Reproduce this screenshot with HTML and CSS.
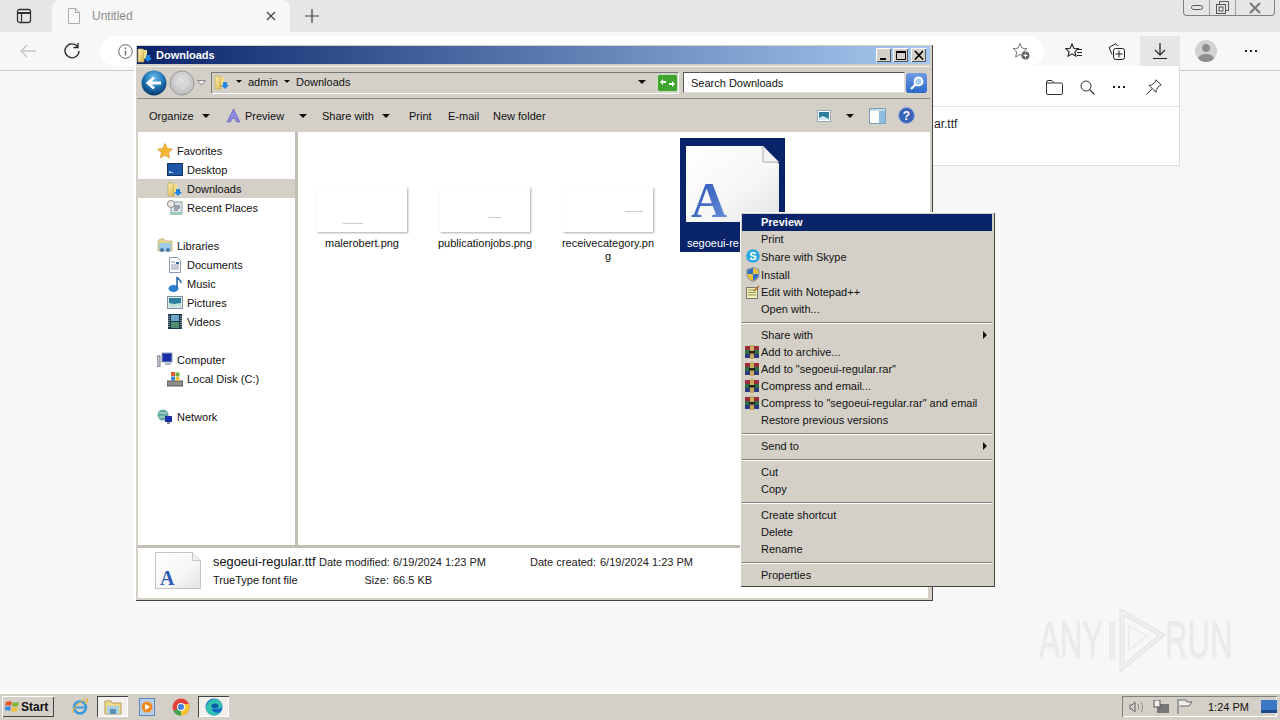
FILE: index.html
```html
<!DOCTYPE html>
<html lang="en">
<head>
    <meta charset="UTF-8">
    <meta name="viewport" content="width=device-width, initial-scale=1.0">
    <title>Downloads</title>
    <link rel="stylesheet" href="styles.css">
</head>
<body>
    <!-- shared icons -->
    <svg class="defs" aria-hidden="true">
        <defs>
            <linearGradient id="folderFill" x1="0" y1="0" x2="1" y2="1"><stop offset="0" stop-color="#fdf3b4"/><stop offset="1" stop-color="#d9b34f"/></linearGradient>
            <linearGradient id="pageFill" x1="0" y1="0" x2="1" y2="1"><stop offset="0" stop-color="#ffffff"/><stop offset="0.6" stop-color="#f6f6f6"/><stop offset="1" stop-color="#e2e2e2"/></linearGradient>
            <radialGradient id="backFill" cx="0.5" cy="0.3" r="0.75"><stop offset="0" stop-color="#6cc0ee"/><stop offset="0.55" stop-color="#1c6fb0"/><stop offset="1" stop-color="#062f63"/></radialGradient>
            <radialGradient id="fwdFill" cx="0.5" cy="0.4" r="0.7"><stop offset="0" stop-color="#e6e6e6"/><stop offset="1" stop-color="#b4b4b4"/></radialGradient>
            <symbol id="i-folder-dl" viewBox="0 0 16 16">
                <path d="M1 2h5l1 1v12H1z" fill="url(#folderFill)" stroke="#b89a4a" stroke-width=".6"/>
                <path d="M7 3h3v9H7z" fill="#f3dd8a"/>
                <path d="M9 8h4v3h2l-4 4-4-4h2z" fill="#1f86e0"/>
            </symbol>
            <symbol id="i-rar" viewBox="0 0 14 14">
                <rect x="0" y="1" width="14" height="4" fill="#9c2a3a"/>
                <rect x="0" y="5" width="14" height="4" fill="#2a6f42"/>
                <rect x="0" y="9" width="14" height="4" fill="#2b3a80"/>
                <rect x="5" y="0" width="4" height="14" fill="#c9a95a"/>
                <rect x="4" y="6" width="6" height="2.5" fill="#222"/>
            </symbol>
        </defs>
    </svg>

    <!-- browser behind the window -->
    <div class="tabstrip">
        <svg class="tabstrip-btn" width="16" height="16" viewBox="0 0 16 16"><rect x="1.5" y="1.5" width="13" height="13" rx="2" fill="none" stroke="#333" stroke-width="1.3"/><path d="M1.5 5h13" stroke="#333" stroke-width="2"/><path d="M5.5 5v9" stroke="#333" stroke-width="1.2"/></svg>
        <div class="tab">
            <svg width="14" height="16" viewBox="0 0 14 16"><path d="M1.5.5h7l4 4v11h-11z M8.5.5v4h4" fill="none" stroke="#aaa"/></svg>
            <span class="tab-title">Untitled</span>
            <svg width="10" height="10" viewBox="0 0 10 10"><path d="M1 1l8 8M9 1l-8 8" stroke="#444" stroke-width="1.3"/></svg>
        </div>
        <svg class="new-tab" width="14" height="14" viewBox="0 0 14 14"><path d="M7 0v14M0 7h14" stroke="#444" stroke-width="1.2"/></svg>
        <div class="win-controls">
            <div class="win-cell"><svg width="12" height="6" viewBox="0 0 12 6"><rect x=".5" y=".5" width="11" height="4" rx="2" fill="none" stroke="#555"/></svg></div>
            <div class="win-cell"><svg width="13" height="13" viewBox="0 0 13 13"><rect x=".5" y="3.5" width="9" height="9" fill="none" stroke="#555"/><path d="M3.5 3V.5h9v9H10" fill="none" stroke="#555"/><rect x="3" y="6" width="4" height="4" fill="none" stroke="#555"/></svg></div>
            <div class="win-cell win-cell-wide"><svg width="12" height="12" viewBox="0 0 12 12"><path d="M1 1l10 10M11 1L1 11" stroke="#777" stroke-width="2"/></svg></div>
        </div>
    </div>
    <div class="browserbar">
        <svg class="nav-back" width="16" height="14" viewBox="0 0 16 14"><path d="M16 7H1M7 1L1 7l6 6" fill="none" stroke="#c4c4c4" stroke-width="1.3"/></svg>
        <svg class="nav-reload" width="16" height="16" viewBox="0 0 16 16"><path d="M13.5 3.5A7 7 0 1 0 15 8" fill="none" stroke="#222" stroke-width="1.3"/><path d="M14 0v4.5H9.5" fill="none" stroke="#222" stroke-width="1.3"/></svg>
        <div class="addressbar">
            <svg width="15" height="15" viewBox="0 0 15 15"><circle cx="7.5" cy="7.5" r="6.8" fill="none" stroke="#666"/><path d="M7.5 6.5v5M7.5 3.5v1.6" stroke="#666" stroke-width="1.3"/></svg>
            <svg class="add-fav" width="18" height="18" viewBox="0 0 18 18"><path d="M8 1.5l2 4.6 5 .5-3.700 3.300L12.300 15 8 12.400 3.700 15l1-5.100L1 6.600l5-.5z" fill="none" stroke="#777"/><circle cx="13.500" cy="13.500" r="4" fill="#666"/><path d="M13.500 11.500v4M11.500 13.500h4" stroke="#fff"/></svg>
        </div>
        <svg class="bar-icon-fav" width="18" height="16" viewBox="0 0 18 16"><path d="M7 1l1.800 4.300 4.500.4-3.400 3 1 4.500L7 10.800l-3.900 2.400 1-4.500-3.400-3 4.500-.4z" fill="none" stroke="#222" stroke-width="1.100"/><path d="M12 6.500h5M12 9.500h5M12 12.500h5" stroke="#222"/></svg>
        <svg class="bar-icon-coll" width="18" height="17" viewBox="0 0 18 17"><path d="M4 11.500L1 4.500 7.500.8 10 3" fill="none" stroke="#222"/><rect x="5.500" y="5.500" width="11" height="11" rx="2" fill="none" stroke="#222"/><path d="M11 7.500v7M7.500 11h7" stroke="#222"/></svg>
        <div class="dl-btn"><svg width="14" height="16" viewBox="0 0 14 16"><path d="M7 0v12M2 7l5 5 5-5M0 15.500h14" fill="none" stroke="#222" stroke-width="1.200"/></svg></div>
        <div class="avatar"><span class="avatar-head"></span><span class="avatar-body"></span></div>
        <div class="dots"><i></i><i></i><i></i></div>
    </div>

    <div class="page"></div>

    <div class="dl-panel">
        <div class="dl-panel-head">
            <svg width="17" height="15" viewBox="0 0 17 15"><path d="M.5 2a1.500 1.500 0 0 1 1.500-1.500h4L8 3h7a1.500 1.500 0 0 1 1.500 1.500V13a1.500 1.500 0 0 1-1.500 1.500H2A1.500 1.500 0 0 1 .5 13zM.5 3h7" fill="none" stroke="#333"/></svg>
            <svg width="15" height="15" viewBox="0 0 15 15"><circle cx="6" cy="6" r="5" fill="none" stroke="#333"/><path d="M9.500 9.500L14.500 14.500" stroke="#333" stroke-width="1.200"/></svg>
            <div class="dots dots-small"><i></i><i></i><i></i></div>
            <svg width="16" height="16" viewBox="0 0 16 16"><path d="M10 .8l5.200 5.200-1.700.6-3.200 4-.3 2.700L3 6.300l2.700-.3 4-3.200zM6 10l-5.500 5.500" fill="none" stroke="#333"/></svg>
        </div>
        <div class="dl-panel-file">ar.ttf</div>
    </div>

    <div class="watermark">
        <span class="watermark-text">ANY</span>
        <svg width="62" height="66" viewBox="0 0 62 66"><path d="M16 6L56 29 16 62zM6 16v38" fill="none" stroke="#e8e8e8" stroke-width="5"/><path d="M16 6L56 29 16 62zM6 16v38" fill="none" stroke="#f7f7f7" stroke-width="1"/><path d="M23 20L41 30 23 44z" fill="none" stroke="#ececec" stroke-width="2"/></svg>
        <span class="watermark-text watermark-run">RUN</span>
    </div>

    <!-- explorer window -->
    <div class="explorer">
        <div class="titlebar">
            <svg width="16" height="16"><use href="#i-folder-dl"/></svg>
            <span class="titlebar-text">Downloads</span>
            <div class="caption-btns">
                <div class="caption-btn"><svg width="12" height="11" viewBox="0 0 12 11"><rect x="2" y="8" width="6" height="2" fill="#000"/></svg></div>
                <div class="caption-btn"><svg width="12" height="11" viewBox="0 0 12 11"><path d="M1.500 1.500h9v8h-9z" fill="none" stroke="#000"/><rect x="1" y="1" width="10" height="2" fill="#000"/></svg></div>
                <div class="caption-btn caption-close"><svg width="12" height="11" viewBox="0 0 12 11"><path d="M2 1l8 8.500M10 1L2 9.500" stroke="#000" stroke-width="1.600"/></svg></div>
            </div>
        </div>

        <div class="addr-row">
            <svg class="nav-orb" width="26" height="26" viewBox="0 0 26 26"><circle cx="13" cy="13" r="12.500" fill="url(#backFill)"/><path d="M20 13H8M13 7.500L7 13l6 5.500" fill="none" stroke="#fff" stroke-width="3"/></svg>
            <svg class="nav-orb" width="26" height="26" viewBox="0 0 26 26"><circle cx="13" cy="13" r="12" fill="url(#fwdFill)" stroke="#999"/><path d="M6 13h12M13 7.500l6 5.500-6 5.500" fill="none" stroke="#d8d8d8" stroke-width="3"/></svg>
            <svg class="nav-drop" width="9" height="6" viewBox="0 0 9 6"><path d="M.5.500L4.500 5 8.500.500z" fill="#eee" stroke="#888"/></svg>
            <div class="crumbs">
                <svg width="16" height="16"><use href="#i-folder-dl"/></svg>
                <span class="caret caret-small crumb-caret"></span>
                <span>admin</span>
                <span class="caret caret-small crumb-caret"></span>
                <span>Downloads</span>
                <span class="caret crumb-drop"></span>
            </div>
            <div class="go-btn"><svg width="21" height="18" viewBox="0 0 21 18"><rect x=".5" y=".5" width="20" height="17" rx="2" fill="#3fa52e" stroke="#c8dcc0"/><path d="M3 8l3-3v2h3v2H6v2zM18 10l-3 3v-2h-3V9h3V7z" fill="#fff"/></svg></div>
            <div class="search-box">Search Downloads</div>
            <div class="search-btn"><svg width="14" height="14" viewBox="0 0 14 14"><circle cx="8.500" cy="5.500" r="4" fill="#a8cdf5" stroke="#fff" stroke-width="1.800"/><path d="M5.500 8.500L1 13" stroke="#fff" stroke-width="2.400"/></svg></div>
        </div>

        <div class="cmd-bar">
            <span class="cmd cmd-organize">Organize<span class="caret"></span></span>
            <span class="cmd cmd-preview">
                <svg width="15" height="15" viewBox="0 0 15 15"><path d="M7.500 1L14 14h-3.500L9 10.500H6L4.500 14H1z" fill="#8d8be0" stroke="#5a58b8" stroke-width=".6"/></svg>
                Preview<span class="caret cmd-caret-wide"></span>
            </span>
            <span class="cmd cmd-share">Share with<span class="caret"></span></span>
            <span class="cmd cmd-print">Print</span>
            <span class="cmd cmd-email">E-mail</span>
            <span class="cmd">New folder</span>
            <div class="cmd-right">
                <svg width="14" height="12" viewBox="0 0 14 12"><rect x=".5" y=".5" width="13" height="11" fill="#fff" stroke="#9ab"/><rect x="2" y="2" width="10" height="8" fill="#2d7d9e"/><path d="M2 8l4-2 6 3v1H2z" fill="#cfe8ef"/></svg>
                <span class="caret"></span>
                <svg width="17" height="16" viewBox="0 0 17 16"><rect x=".5" y=".5" width="16" height="15" fill="#fff" stroke="#7f9db9"/><rect x="10" y="1" width="6" height="14" fill="#8fbfe0"/><rect x="1" y="1" width="15" height="2" fill="#c5dcec"/></svg>
                <svg width="17" height="17" viewBox="0 0 17 17"><circle cx="8.500" cy="8.500" r="8" fill="#3a62b8" stroke="#9db2dc"/><text x="8.500" y="13" text-anchor="middle" class="help-mark">?</text></svg>
            </div>
        </div>

        <div class="main">
            <nav class="tree">
                <div class="tree-row tree-head">
                    <svg width="16" height="16" viewBox="0 0 16 16"><path d="M8 .5l2.300 5 5.200.6-3.900 3.500 1.100 5.400L8 12.300 3.300 15l1.100-5.400L.5 6.100l5.200-.6z" fill="#f7b733" stroke="#c98a2b" stroke-width=".6"/></svg>
                    Favorites
                </div>
                <div class="tree-row tree-child">
                    <svg width="16" height="14" viewBox="0 0 16 14"><rect x=".5" y=".5" width="15" height="12" fill="#1f57a8" stroke="#16325f"/><path d="M2 8l5 2H2z" fill="#bcd7f2"/></svg>
                    Desktop
                </div>
                <div class="tree-row tree-child tree-selected">
                    <svg width="16" height="16"><use href="#i-folder-dl"/></svg>
                    Downloads
                </div>
                <div class="tree-row tree-child tree-group-end">
                    <svg width="16" height="16" viewBox="0 0 16 16"><rect x="4" y="2" width="11" height="11" fill="#dfe8e8" stroke="#78a0a0"/><circle cx="4" cy="4" r="3.500" fill="#eee" stroke="#888"/><rect x="3" y="12" width="12" height="3" fill="#9fc8b8"/><path d="M7 6h6M7 8h6M7 10h4" stroke="#557"/></svg>
                    Recent Places
                </div>

                <div class="tree-row tree-head">
                    <svg width="16" height="15" viewBox="0 0 16 15"><path d="M1 3l2-2h4l1 2h7v10H1z" fill="#e8d88a" stroke="#a99a5a" stroke-width=".6"/><rect x="2" y="5" width="12" height="8" fill="#9cc9e4"/><circle cx="5" cy="12" r="2" fill="#4878a8"/><circle cx="11" cy="12" r="2" fill="#4878a8"/></svg>
                    Libraries
                </div>
                <div class="tree-row tree-child">
                    <svg width="16" height="16" viewBox="0 0 16 16"><path d="M2.500.5h8l3 3v12h-11z" fill="#fff" stroke="#8a9ab0"/><path d="M4 5h4M4 8h8M4 10h8M4 12h8" stroke="#8a9ab0"/><rect x="9" y="5" width="3" height="2" fill="#3566a8"/></svg>
                    Documents
                </div>
                <div class="tree-row tree-child">
                    <svg width="16" height="16" viewBox="0 0 16 16"><ellipse cx="6.500" cy="12.500" rx="5" ry="3.500" fill="#2d7fd0"/><path d="M10 12V1c1 2 4 3 4 6" fill="none" stroke="#1c5fa8" stroke-width="1.500"/></svg>
                    Music
                </div>
                <div class="tree-row tree-child">
                    <svg width="16" height="13" viewBox="0 0 16 13"><rect x=".5" y=".5" width="15" height="12" fill="#dfe8ef" stroke="#7f8fa0"/><rect x="2" y="2" width="12" height="9" fill="#2b7e9c"/><path d="M2 7l5 1 7-1v4H2z" fill="#bfe1d8"/></svg>
                    Pictures
                </div>
                <div class="tree-row tree-child tree-group-end">
                    <svg width="16" height="15" viewBox="0 0 16 15"><rect x="1" width="14" height="15" fill="#1c3a4a"/><rect x="4" y="1" width="8" height="6" fill="#6ea6c8"/><rect x="4" y="8" width="8" height="6" fill="#4f8d74"/><path d="M2 2v12M14 2v12" stroke="#ddd" stroke-dasharray="1 1"/></svg>
                    Videos
                </div>

                <div class="tree-row tree-head">
                    <svg width="16" height="15" viewBox="0 0 16 15"><rect x="5" y="1" width="10" height="9" fill="#1a2ea8" stroke="#8fa0b8"/><rect x="8" y="11" width="6" height="2" fill="#b0b8c0"/><rect x="0" y="4" width="3" height="11" fill="#c8ccd0" stroke="#778"/></svg>
                    Computer
                </div>
                <div class="tree-row tree-child tree-group-end">
                    <svg width="16" height="16" viewBox="0 0 16 16"><rect x="0" y="10" width="16" height="5" fill="#8a8f88" stroke="#555"/><rect x="4" y="1" width="4" height="4" fill="#e05a2b"/><rect x="8.500" y="1.500" width="4" height="4" fill="#6cae3a"/><rect x="4" y="5.500" width="4" height="4" fill="#3a86d8"/><rect x="8.500" y="6" width="4" height="4" fill="#f0c23a"/></svg>
                    Local Disk (C:)
                </div>

                <div class="tree-row tree-head">
                    <svg width="16" height="16" viewBox="0 0 16 16"><circle cx="6" cy="6" r="5.500" fill="#5ea8a0"/><path d="M2 4h8M2 8h7" stroke="#c8e8e0"/><rect x="8" y="7" width="7" height="6" fill="#1a2ea8"/><rect x="10" y="13" width="3" height="2" fill="#889"/></svg>
                    Network
                </div>
            </nav>

            <div class="splitter"></div>

            <section class="files">
                <div class="tile">
                    <div class="thumb"><span class="thumb-mark thumb-mark-a"></span></div>
                    <div class="tile-label">malerobert.png</div>
                </div>
                <div class="tile">
                    <div class="thumb"><span class="thumb-mark thumb-mark-b"></span></div>
                    <div class="tile-label">publicationjobs.png</div>
                </div>
                <div class="tile">
                    <div class="thumb"><span class="thumb-mark thumb-mark-c"></span></div>
                    <div class="tile-label">receivecategory.pn<br>g</div>
                </div>
                <div class="tile tile-selected">
                    <svg class="font-page" width="93" height="76" viewBox="0 0 93 76">
                        <defs>
                            <linearGradient id="fontLetter" x1="0" y1="0" x2="1" y2="1"><stop offset="0" stop-color="#1f48b0"/><stop offset="1" stop-color="#6f95dd"/></linearGradient>
                        </defs>
                        <path d="M0 0h77l16 18v58H0z" fill="url(#pageFill)"/>
                        <path d="M77 0v16h16" fill="#f4f4f4" stroke="#a8a8a8"/>
                        <text x="5" y="71" class="font-letter" fill="url(#fontLetter)">A</text>
                    </svg>
                    <div class="tile-label">segoeui-re</div>
                </div>
            </section>
        </div>

        <div class="details">
            <svg class="details-icon" width="46" height="37" viewBox="0 0 46 37">
                <path d="M.5.500h37l8 8v28H.500z" fill="url(#pageFill)" stroke="#c4c4c4"/>
                <path d="M37.500.500v8h8" fill="#f0f0f0" stroke="#c4c4c4"/>
                <text x="5" y="33" class="details-letter">A</text>
            </svg>
            <div class="details-name">
                <div class="details-title">segoeui-regular.ttf</div>
                <div>TrueType font file</div>
            </div>
            <div class="details-meta">
                <span class="meta-key">Date modified:</span><span>6/19/2024 1:23 PM</span>
                <span class="meta-key">Size:</span><span>66.5 KB</span>
            </div>
            <div class="details-meta details-meta-created">
                <span class="meta-key">Date created:</span><span>6/19/2024 1:23 PM</span>
            </div>
        </div>
    </div>

    <!-- right click menu -->
    <div class="ctx-menu">
        <div class="ctx-item ctx-active">Preview</div>
        <div class="ctx-item">Print</div>
        <div class="ctx-item ctx-tall">
            <svg class="ctx-icon" width="14" height="14" viewBox="0 0 14 14"><circle cx="7" cy="7" r="6.800" fill="#29a8e0"/><text x="7" y="11" text-anchor="middle" class="skype-mark">S</text></svg>
            Share with Skype
        </div>
        <div class="ctx-item ctx-tall">
            <svg class="ctx-icon" width="14" height="15" viewBox="0 0 14 15"><path d="M7 .5l6 2v5c0 3.500-3 6-6 7-3-1-6-3.500-6-7v-5z" fill="#e8c23a" stroke="#7a8ab0"/><path d="M7 1v6H1.500v-4zM7 7h5.500c0 3-2.500 5.500-5.500 6.500z" fill="#2f6fc8"/></svg>
            Install
        </div>
        <div class="ctx-item">
            <svg class="ctx-icon" width="14" height="14" viewBox="0 0 14 14"><rect x=".5" y="2.500" width="11" height="11" fill="#f4eeb0" stroke="#777"/><path d="M2 5h8M2 7.500h8M2 10h8" stroke="#8a9a5a"/><path d="M8 6l5-5" stroke="#b5651d" stroke-width="1.500"/></svg>
            Edit with Notepad++
        </div>
        <div class="ctx-item">Open with...</div>
        <div class="ctx-sep"></div>
        <div class="ctx-item ctx-sub">Share with</div>
        <div class="ctx-item"><svg class="ctx-icon ctx-icon-rar" width="14" height="14"><use href="#i-rar"/></svg>Add to archive...</div>
        <div class="ctx-item"><svg class="ctx-icon ctx-icon-rar" width="14" height="14"><use href="#i-rar"/></svg>Add to "segoeui-regular.rar"</div>
        <div class="ctx-item"><svg class="ctx-icon ctx-icon-rar" width="14" height="14"><use href="#i-rar"/></svg>Compress and email...</div>
        <div class="ctx-item"><svg class="ctx-icon ctx-icon-rar" width="14" height="14"><use href="#i-rar"/></svg>Compress to "segoeui-regular.rar" and email</div>
        <div class="ctx-item">Restore previous versions</div>
        <div class="ctx-sep"></div>
        <div class="ctx-item ctx-sub">Send to</div>
        <div class="ctx-sep"></div>
        <div class="ctx-item">Cut</div>
        <div class="ctx-item">Copy</div>
        <div class="ctx-sep"></div>
        <div class="ctx-item">Create shortcut</div>
        <div class="ctx-item">Delete</div>
        <div class="ctx-item">Rename</div>
        <div class="ctx-sep"></div>
        <div class="ctx-item">Properties</div>
    </div>

    <!-- taskbar -->
    <footer class="taskbar">
        <div class="start-btn">
            <svg width="16" height="15" viewBox="0 0 16 15"><path d="M1 3c2-1 4-1 6 0L6 7C4 6 2 6 0 7z" fill="#e2552b"/><path d="M8 3c2 1 4 1 6 0l-1 4c-2 1-4 1-6 0z" fill="#7ab53a"/><path d="M0 8c2-1 4-1 6 0l-1 4c-2-1-4-1-6 0z" fill="#3a8ae0"/><path d="M7 8c2 1 4 1 6 0l-1 4c-2 1-4 1-6 0z" fill="#f2c23a"/></svg>
            Start
        </div>
        <div class="task-icon task-ie">
            <svg width="18" height="18" viewBox="0 0 18 18"><circle cx="9" cy="9.500" r="6" fill="none" stroke="#3a9ae0" stroke-width="2.500"/><path d="M4 9.500h10" stroke="#3a9ae0" stroke-width="2"/><path d="M2 15C0 12 8 3 16 1c2 0-1 4-2 5" fill="none" stroke="#e8b83a" stroke-width="1.200"/></svg>
        </div>
        <div class="task-icon task-active task-explorer">
            <svg width="18" height="16" viewBox="0 0 18 16"><path d="M1 2h6l1 2h9v11H1z" fill="#ecd98a" stroke="#b09a5a"/><rect x="3" y="7" width="12" height="8" fill="#a8d0e4"/><rect x="6" y="10" width="6" height="5" fill="#5a90b8"/></svg>
        </div>
        <div class="task-icon task-media">
            <svg width="16" height="18" viewBox="0 0 16 18"><rect x=".5" y=".5" width="15" height="17" fill="#b7cfe8" stroke="#5a88c0"/><circle cx="8" cy="9" r="5.500" fill="#f08a1e"/><path d="M6 6l5 3-5 3z" fill="#fff"/></svg>
        </div>
        <div class="task-icon task-chrome">
            <svg width="18" height="18" viewBox="0 0 18 18"><circle cx="9" cy="9" r="8.500" fill="#e2443a"/><path d="M9 9L1.500 13A8.500 8.500 0 0 0 9 17.500z" fill="#3fa34d"/><path d="M9 9v8.500A8.500 8.500 0 0 0 17 6H9z" fill="#f6c52e"/><circle cx="9" cy="9" r="4" fill="#fff"/><circle cx="9" cy="9" r="3" fill="#3f7fe0"/></svg>
        </div>
        <div class="task-icon task-active task-edge">
            <svg width="18" height="18" viewBox="0 0 18 18"><circle cx="9" cy="9" r="8.500" fill="#1368c4"/><path d="M1 9c1-5 5-8 9-8 4 0 7 3 7 7 0 2-2 3-5 3H7c0 3 4 5 9 3-2 3-5 3.500-7 3.500-5 0-8-4-8-8.500z" fill="#34c0b0"/><ellipse cx="10" cy="8" rx="3.500" ry="2.500" fill="#0f5aa8"/></svg>
        </div>
        <div class="tray">
            <svg width="16" height="14" viewBox="0 0 16 14"><path d="M1 5h2l3-3v10L3 9H1z" fill="none" stroke="#666"/><path d="M9 4c1 2 1 4 0 6M12 2c2 3 2 7 0 10" fill="none" stroke="#888"/></svg>
            <svg class="tray-net" width="16" height="14" viewBox="0 0 16 14"><rect x="4" y="4" width="12" height="9" fill="#777"/><rect x="1" y="0" width="6" height="7" fill="#eee" stroke="#555"/></svg>
            <svg class="tray-flag" width="16" height="15" viewBox="0 0 16 15"><path d="M1 0v15M1 1h8l1 2h5l-3 4H3" fill="#eee" stroke="#666"/></svg>
            <span class="tray-time">1:24 PM</span>
            <svg width="16" height="13" viewBox="0 0 16 13"><rect width="16" height="10" fill="#3b78c8"/><rect y="10" width="16" height="3" fill="#1e4a8a"/></svg>
        </div>
    </footer>
</body>
</html>
```

FILE: styles.css
```css
body {
    font-family: "Liberation Sans", Arial, sans-serif;
    font-size: 11px;
    color: #111;
    background-color: #f7f7f7;
    margin: 0;
    width: 1280px;
    height: 720px;
    overflow: hidden;
    position: relative;
    display: flex;
    flex-direction: column;
}

.defs {
    position: absolute;
    width: 0;
    height: 0;
}

svg {
    flex: none;
    display: block;
}

/* browser */
.tabstrip {
    height: 32px;
    background-color: #e6e6e6;
    display: flex;
    align-items: center;
    position: relative;
    flex: none;
}

.tabstrip-btn {
    margin-left: 16px;
}

.tab {
    width: 238px;
    height: 32px;
    margin-left: 20px;
    box-sizing: border-box;
    padding: 0 14px 0 15px;
    background-color: #f7f7f7;
    border-radius: 8px 8px 0 0;
    display: flex;
    align-items: center;
}

.tab-title {
    margin-left: 11px;
    flex: 1;
    font-size: 12px;
    color: #8c8c8c;
}

.new-tab {
    margin-left: 15px;
}

.win-controls {
    position: absolute;
    top: 0;
    left: 1183px;
    width: 92px;
    height: 16px;
    box-sizing: border-box;
    border: 1px solid #808080;
    border-top: 0;
    border-radius: 0 0 4px 4px;
    display: flex;
}

.win-cell {
    width: 25px;
    border-right: 1px solid #a0a0a0;
    display: flex;
    align-items: center;
    justify-content: center;
}

.win-cell-wide {
    flex: 1;
    border-right: 0;
}

.browserbar {
    height: 39px;
    box-sizing: border-box;
    border-bottom: 1px solid #c8c8c8;
    background-color: #f7f7f7;
    display: flex;
    align-items: center;
    flex: none;
}

.nav-back {
    margin-left: 20px;
}

.nav-reload {
    margin-left: 28px;
}

.addressbar {
    width: 944px;
    height: 30px;
    margin-left: 20px;
    box-sizing: border-box;
    padding: 0 14px 0 18px;
    background-color: #fff;
    border-radius: 15px;
    display: flex;
    align-items: center;
    justify-content: space-between;
}

.bar-icon-fav {
    margin-left: 21px;
}

.bar-icon-coll {
    margin-left: 25px;
}

.dl-btn {
    width: 40px;
    height: 30px;
    margin-left: 14px;
    background-color: #e6e6e6;
    display: flex;
    align-items: center;
    justify-content: center;
}

.avatar {
    width: 22px;
    height: 22px;
    margin-left: 15px;
    border-radius: 50%;
    background-color: #d2d2d2;
    position: relative;
    overflow: hidden;
}

.avatar-head {
    position: absolute;
    left: 7px;
    top: 4px;
    width: 8px;
    height: 8px;
    border-radius: 50%;
    background-color: #8e8e8e;
}

.avatar-body {
    position: absolute;
    left: 3px;
    top: 14px;
    width: 16px;
    height: 10px;
    border-radius: 50%;
    background-color: #8e8e8e;
}

.dots {
    margin-left: 28px;
    display: flex;
    gap: 3px;
}

.dots i {
    width: 2px;
    height: 2px;
    background-color: #222;
}

.page {
    flex: 1;
}

.dl-panel {
    position: absolute;
    left: 925px;
    top: 66px;
    width: 255px;
    height: 100px;
    box-sizing: border-box;
    background-color: #fff;
    border: 1px solid #dcdcdc;
    border-top: 0;
}

.dl-panel-head {
    height: 41px;
    box-sizing: border-box;
    border-bottom: 1px solid #e2e2e2;
    padding: 2px 17px 0 0;
    display: flex;
    align-items: center;
    justify-content: flex-end;
    gap: 17px;
}

.dots-small {
    margin: 0 3px 0 0;
    width: 14px;
    justify-content: center;
}

.dl-panel-file {
    margin: 9px 0 0 8px;
    line-height: 16px;
    font-size: 12px;
    color: #222;
}

.watermark {
    position: absolute;
    left: 1039px;
    top: 606px;
    display: flex;
    align-items: center;
}

.watermark-text {
    font-size: 52px;
    color: #eaeaea;
    display: block;
    width: 67px;
    transform: scaleX(0.6);
    transform-origin: left center;
    text-shadow: 0 2px 2px #f0f0f0;
    white-space: nowrap;
}

.watermark-run {
    margin-left: -3px;
}

/* explorer window */
.explorer {
    position: absolute;
    left: 134px;
    top: 43px;
    width: 799px;
    height: 558px;
    box-sizing: border-box;
    padding: 3px;
    background-color: #d4d0c8;
    box-shadow: inset 2px 2px 0 #fff, inset 1px 1px 0 #d4d0c8, inset -1px -1px 0 #444;
    display: flex;
    flex-direction: column;
}

.titlebar {
    height: 18px;
    background: linear-gradient(to right, #0a246a, #a6caf0);
    display: flex;
    align-items: center;
    flex: none;
}

.titlebar-text {
    margin-left: 3px;
    font-weight: bold;
    color: #fff;
}

.caption-btns {
    margin-left: auto;
    margin-right: 4px;
    display: flex;
    gap: 2px;
}

.caption-btn {
    width: 15px;
    height: 14px;
    background-color: #d4d0c8;
    box-shadow: inset 1px 1px 0 #fff, inset -1px -1px 0 #555;
    display: flex;
    align-items: center;
    justify-content: center;
}

.caption-close {
    margin-left: 1px;
}

.addr-row {
    height: 33px;
    margin-top: 2px;
    border-top: 1px solid #f2f0ec;
    border-bottom: 1px solid #8a8a8a;
    box-sizing: border-box;
    padding-left: 4px;
    display: flex;
    align-items: center;
    flex: none;
}

.nav-orb {
    margin-right: 2px;
}

.crumbs {
    width: 468px;
    height: 22px;
    margin-left: 5px;
    box-sizing: border-box;
    padding: 0 0 2px 2px;
    border-top: 1px solid #777;
    border-left: 1px solid #777;
    border-right: 1px solid #fff;
    border-bottom: 1px solid #fff;
    display: flex;
    align-items: center;
    position: relative;
}

.caret {
    display: inline-block;
    width: 0;
    height: 0;
    border-left: 4px solid transparent;
    border-right: 4px solid transparent;
    border-top: 4px solid #111;
    margin-left: 8px;
    vertical-align: 1px;
}

.caret-small {
    border-left-width: 3px;
    border-right-width: 3px;
    border-top-width: 3px;
}

.crumbs .crumb-caret {
    margin: 0 6px;
}

.crumbs .crumb-drop {
    position: absolute;
    right: 32px;
    top: 7px;
    margin: 0;
}

.go-btn {
    margin-left: -22px;
    position: relative;
}

.search-box {
    width: 222px;
    height: 21px;
    margin-left: 5px;
    box-sizing: border-box;
    padding-left: 7px;
    background-color: #fff;
    border-top: 1px solid #555;
    border-left: 1px solid #555;
    border-right: 1px solid #ddd;
    border-bottom: 1px solid #ddd;
    display: flex;
    align-items: center;
}

.search-btn {
    width: 21px;
    height: 20px;
    margin-left: 1px;
    border-radius: 3px;
    background: linear-gradient(#6f9ce6, #2a68c8);
    display: flex;
    align-items: center;
    justify-content: center;
}

.cmd-bar {
    height: 33px;
    padding-left: 12px;
    box-sizing: border-box;
    display: flex;
    align-items: center;
    flex: none;
}

.cmd {
    display: flex;
    align-items: center;
    white-space: nowrap;
}

.cmd-organize {
    width: 77px;
}

.cmd-preview {
    width: 96px;
}

.cmd-preview svg {
    margin-right: 4px;
}

.cmd-caret-wide {
    margin-left: 15px;
}

.cmd-share {
    width: 87px;
}

.cmd-print {
    width: 39px;
}

.cmd-email {
    width: 45px;
}

.cmd-right {
    margin-left: auto;
    margin-right: 15px;
    display: flex;
    align-items: center;
}

.cmd-right .caret {
    margin: 0 15px;
}

.cmd-right svg:last-child {
    margin-left: 12px;
}

.help-mark {
    font: bold 12px "Liberation Sans", sans-serif;
    fill: #fff;
}

.main {
    flex: 1;
    display: flex;
    min-height: 0;
    border-bottom: 3px solid #c2beb6;
}

.tree {
    width: 157px;
    background-color: #fff;
    box-sizing: border-box;
    padding-top: 9px;
    margin-left: 1px;
    flex: none;
}

.tree-row {
    height: 19px;
    display: flex;
    align-items: center;
    white-space: nowrap;
}

.tree-row svg {
    margin-right: 4px;
}

.tree-head {
    padding-left: 19px;
}

.tree-child {
    padding-left: 29px;
}

.tree-group-end {
    margin-bottom: 19px;
}

.tree-selected {
    background-color: #d4d0c8;
}

.splitter {
    width: 3px;
    background-color: #c2beb6;
    flex: none;
}

.files {
    flex: 1;
    background-color: #fff;
    padding: 6px 0 0 11px;
    display: flex;
    gap: 18px;
    align-items: flex-start;
}

.tile {
    width: 105px;
    height: 114px;
    box-sizing: border-box;
    position: relative;
    text-align: center;
}

.thumb {
    width: 90px;
    height: 45px;
    margin: 49px auto 0;
    background-color: #fff;
    box-shadow: 1px 1px 2px #aaa;
    position: relative;
}

.thumb-mark {
    position: absolute;
    height: 1px;
    background-color: #c4ccd4;
}

.thumb-mark-a {
    left: 26px;
    top: 36px;
    width: 20px;
}

.thumb-mark-b {
    left: 48px;
    top: 30px;
    width: 13px;
}

.thumb-mark-c {
    left: 62px;
    top: 24px;
    width: 18px;
}

.tile-label {
    margin: 5px 0 0 1px;
    line-height: 13px;
    white-space: nowrap;
}

.tile-selected {
    background-color: #0a246a;
    color: #fff;
    padding-top: 8px;
    margin-left: 2px;
}

.tile-selected .tile-label {
    margin: 15px 0 0 7px;
    text-align: left;
}

.font-page {
    margin-left: 6px;
}

.font-letter {
    font: bold 50px "Liberation Serif", serif;
}

.details {
    height: 50px;
    margin: 0 2px 0 1px;
    background-color: #fff;
    display: flex;
    flex: none;
}

.details-icon {
    margin: 4px 0 0 17px;
}

.details-letter {
    font: bold 20px "Liberation Serif", serif;
    fill: #2f5cb8;
}

.details-name {
    width: 106px;
    margin-left: 12px;
    padding-top: 5px;
    line-height: 18px;
    white-space: nowrap;
}

.details-title {
    font-size: 12.8px;
}

.details-meta {
    width: 210px;
    padding-top: 5px;
    line-height: 18px;
    display: grid;
    grid-template-columns: 70px auto;
    column-gap: 4px;
    align-content: start;
    white-space: nowrap;
    color: #222;
}

.details-meta-created {
    grid-template-columns: 67px auto;
}

.meta-key {
    text-align: right;
}

/* context menu */
.ctx-menu {
    position: absolute;
    left: 740px;
    top: 212px;
    width: 255px;
    height: 375px;
    box-sizing: border-box;
    padding: 2px;
    background-color: #d4d0c8;
    box-shadow: inset 1px 1px 0 #fff, inset -1px -1px 0 #444;
}

.ctx-item {
    height: 17px;
    box-sizing: border-box;
    padding: 0 0 2px 19px;
    margin-right: 1px;
    display: flex;
    align-items: center;
    position: relative;
    white-space: nowrap;
}

.ctx-tall {
    height: 18px;
    padding-bottom: 0;
}

.ctx-active {
    background-color: #0a246a;
    color: #fff;
    font-weight: bold;
}

.ctx-icon {
    position: absolute;
    left: 4px;
    top: 1px;
}

.ctx-icon-rar {
    left: 3px;
}

.skype-mark {
    font: bold 11px "Liberation Sans", sans-serif;
    fill: #fff;
}

.ctx-sub::after {
    content: "";
    position: absolute;
    right: 5px;
    top: 4px;
    border-top: 4px solid transparent;
    border-bottom: 4px solid transparent;
    border-left: 4px solid #111;
}

.ctx-sep {
    height: 9px;
    box-sizing: border-box;
    margin-right: 1px;
    padding-top: 4px;
}

.ctx-sep::before {
    content: "";
    display: block;
    height: 1px;
    background-color: #808080;
    box-shadow: 0 1px 0 #fff;
}

/* taskbar */
.taskbar {
    height: 28px;
    box-sizing: border-box;
    background-color: #d4d0c8;
    border-top: 2px solid #fff;
    padding: 2px 3px 3px 2px;
    display: flex;
    align-items: center;
    flex: none;
}

.start-btn {
    width: 52px;
    height: 21px;
    box-sizing: border-box;
    padding-left: 3px;
    font-size: 12px;
    font-weight: bold;
    background-color: #d4d0c8;
    box-shadow: inset 1px 1px 0 #fff, inset -1px -1px 0 #444;
    display: flex;
    align-items: center;
}

.task-icon {
    height: 21px;
    display: flex;
    align-items: center;
    justify-content: center;
}

.task-ie {
    margin-left: 17px;
}

.task-explorer {
    margin-left: 8px;
}

.task-media {
    margin-left: 11px;
}

.task-chrome {
    margin-left: 17px;
}

.task-edge {
    margin-left: 8px;
}

.task-active {
    width: 31px;
    background-color: #f2f0ec;
    box-shadow: inset 1px 1px 0 #444, inset -1px -1px 0 #fff;
}

.tray {
    width: 155px;
    height: 21px;
    margin-left: auto;
    box-sizing: border-box;
    padding: 0 1px 0 7px;
    box-shadow: inset 1px 1px 0 #808080, inset -1px -1px 0 #fff;
    display: flex;
    align-items: center;
}

.tray-net {
    margin-left: 8px;
}

.tray-flag {
    margin-left: 8px;
}

.tray-time {
    margin-left: 15px;
    margin-right: 12px;
    white-space: nowrap;
}
```
